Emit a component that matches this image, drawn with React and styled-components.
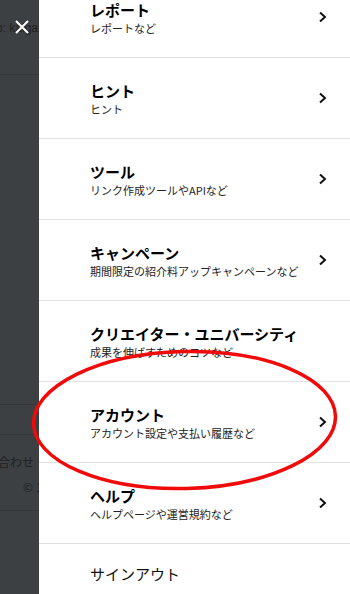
import React from "react";
import styled, { createGlobalStyle } from "styled-components";

const menu = [
  { title: "レポート", sub: "レポートなど" },
  { title: "ヒント", sub: "ヒント" },
  { title: "ツール", sub: "リンク作成ツールやAPIなど" },
  { title: "キャンペーン", sub: "期間限定の紹介料アップキャンペーンなど" },
  { title: "クリエイター・ユニバーシティ", sub: "成果を伸ばすためのコツなど", noArrow: true },
  { title: "アカウント", sub: "アカウント設定や支払い履歴など" },
  { title: "ヘルプ", sub: "ヘルプページや運営規約など" },
];

function Chevron() {
  return (
    <svg width="9" height="12" viewBox="0 0 9 12">
      <polyline
        points="2,1.5 7,6 2,10.5"
        fill="none"
        stroke="#111"
        strokeWidth="2"
        strokeLinejoin="miter"
      />
    </svg>
  );
}

function CloseIcon() {
  return (
    <svg width="14" height="14" viewBox="0 0 14 14">
      <path d="M1 1 L13 13 M13 1 L1 13" stroke="#fff" strokeWidth="2" />
    </svg>
  );
}

function App() {
  return (
    <Page>
      <GlobalStyle />
      <Backdrop>
        <BackHeader>
          <DimText>Sp: kaigai_affiliate-22</DimText>
        </BackHeader>
        <BackBlock $h={329} />
        <BackBlock $h={29} />
        <BackFooter>
          <DimRight>お問い合わせ</DimRight>
          <DimRight $pad={0}>© 1996-2024</DimRight>
        </BackFooter>
        <Close>
          <CloseIcon />
        </Close>
      </Backdrop>

      <Drawer>
        <List>
          {menu.map((item) => (
            <Row key={item.title}>
              <Texts>
                <Title>{item.title}</Title>
                <Sub>{item.sub}</Sub>
              </Texts>
              {!item.noArrow && <Chevron />}
            </Row>
          ))}
          <SignOut>サインアウト</SignOut>
        </List>
      </Drawer>

      <Mark viewBox="0 0 350 594" width="350" height="594">
        <ellipse
          cx="184.5"
          cy="420"
          rx="151"
          ry="68.5"
          fill="none"
          stroke="#f00a0a"
          strokeWidth="3.5"
          transform="rotate(-1.5 184.5 420)"
        />
      </Mark>
    </Page>
  );
}

const GlobalStyle = createGlobalStyle`
  html, body {
    margin: 0;
    padding: 0;
    background: #fff;
    overflow: hidden;
  }
  body {
    font-family: "Noto Sans CJK JP", "Noto Sans", sans-serif;
  }
`;

const Page = styled.div`
  position: relative;
  width: 350px;
  height: 594px;
  display: flex;
  overflow: hidden;
`;

const Backdrop = styled.div`
  position: relative;
  width: 39px;
  flex-shrink: 0;
  background: #3d4042;
  display: flex;
  flex-direction: column;
  overflow: hidden;
`;

const BackHeader = styled.div`
  height: 75px;
  border-bottom: 1px solid #343739;
  display: flex;
  align-items: flex-start;
  padding-top: 20px;
  box-sizing: border-box;
  margin-left: -12px;
`;

const DimText = styled.span`
  font-family: "Liberation Sans", "Noto Sans CJK JP", sans-serif;
  font-size: 12px;
  line-height: 16px;
  color: #1e2021;
  white-space: nowrap;
`;

const BackBlock = styled.div`
  height: ${(p) => p.$h}px;
  flex-shrink: 0;
  border-bottom: 1px solid #343739;
`;

const BackFooter = styled.div`
  height: 76px;
  flex-shrink: 0;
  border-bottom: 1px solid #343739;
  display: flex;
  flex-direction: column;
  padding-top: 18px;
  gap: 8px;
  box-sizing: border-box;
`;

const DimRight = styled.div`
  display: flex;
  justify-content: flex-end;
  white-space: nowrap;
  font-size: 12px;
  line-height: 17px;
  color: #1e2021;
  padding-right: ${(p) => (p.$pad === undefined ? 5 : p.$pad)}px;
  margin-left: ${(p) => (p.$pad === 0 ? "23px" : "0")};
  justify-content: ${(p) => (p.$pad === 0 ? "flex-start" : "flex-end")};
`;

const Close = styled.div`
  position: absolute;
  left: 15px;
  top: 20px;
  width: 14px;
  height: 14px;
  display: flex;
`;

const Drawer = styled.div`
  flex: 1;
  background: #fff;
  overflow: hidden;
`;

const List = styled.div`
  margin-top: -23px;
  display: flex;
  flex-direction: column;
`;

const Row = styled.div`
  height: 80px;
  border-bottom: 1px solid #e2e2e2;
  display: flex;
  align-items: center;
  justify-content: space-between;
  padding: 0 23px 0 51px;
`;

const Texts = styled.div`
  display: flex;
  flex-direction: column;
`;

const Title = styled.div`
  font-size: 15px;
  font-weight: 700;
  line-height: 22px;
  color: #000;
`;

const Sub = styled.div`
  font-size: 11px;
  line-height: 14px;
  color: #222;
`;

const SignOut = styled.div`
  padding: 20px 0 20px 51px;
  font-size: 15px;
  line-height: 20px;
  color: #111;
`;

const Mark = styled.svg`
  position: absolute;
  left: 0;
  top: 0;
  pointer-events: none;
`;

export default App;
